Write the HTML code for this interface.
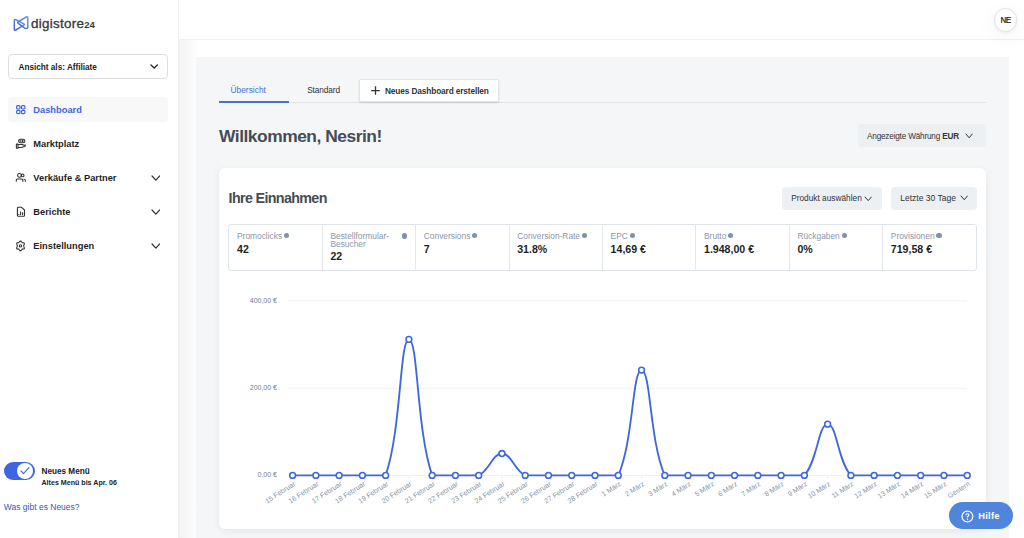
<!DOCTYPE html>
<html><head><meta charset="utf-8">
<style>
*{box-sizing:border-box;margin:0;padding:0}
html,body{width:1024px;height:538px;overflow:hidden;background:#fff;font-family:"Liberation Sans",sans-serif;position:relative}
.a{position:absolute;white-space:nowrap;line-height:1}
.b{position:absolute}
.lbl{color:#8a98aa}
.info{position:absolute;width:5.2px;height:5.2px;border-radius:50%;background:#8191a6}
.ii{display:inline-block;width:5.2px;height:5.2px;border-radius:50%;background:#8191a6;margin-left:1.8px;vertical-align:0.8px}
</style></head><body>
<div class="b" style="left:0;top:0;width:179px;height:538px;background:#fff;border-right:1px solid #eeeeee"></div>
<div class="b" style="left:179px;top:0;width:845px;height:40px;background:#fff;border-bottom:1px solid #f1f1f1"></div>
<div class="b" style="left:179px;top:40px;width:19px;height:498px;background:linear-gradient(90deg,#f2f2f2,#f8f8f8 50%,#fff)"></div>
<div class="b" style="left:196px;top:57px;width:813px;height:490px;background:#f5f6f8"></div>
<svg class="a" style="left:10px;top:12px" width="24" height="24" viewBox="0 0 24 24">
<defs><linearGradient id="lg" x1="0" y1="1" x2="1" y2="0"><stop offset="0" stop-color="#5660cc"/><stop offset="1" stop-color="#55a2e2"/></linearGradient></defs>
<g fill="none" stroke="url(#lg)" stroke-width="1.5" stroke-linejoin="round" stroke-linecap="round">
<path d="M4.3 8.6 Q4.3 7 5.8 7.7 L13.8 11.9 Q14.9 12.5 13.8 13.2 L5.8 18 Q4.3 18.9 4.3 17.2 Z"/>
<path d="M16.3 5 Q17.8 4.3 17.8 6 L17.8 15.1 Q17.8 16.5 16.3 16.4 L15 16.3 L8.3 11.3 Q7.1 10.4 8.4 9.7 Z"/>
</g></svg>
<div class="a" style="left:31px;top:17px;font-size:13.4px;color:#3a3a3a;letter-spacing:0.3px;-webkit-text-stroke:0.35px #3a3a3a">digistore<span style="font-size:9.6px;font-weight:700;letter-spacing:-0.1px;-webkit-text-stroke:0">24</span></div>
<div class="b" style="left:8px;top:54px;width:160px;height:25px;border:1px solid #dedede;border-radius:4px"></div>
<div class="a" style="left:18.5px;top:64px;font-size:8.2px;font-weight:700;color:#222;">Ansicht als: Affiliate</div>
<svg class="a" style="left:150.0px;top:64.2px" width="8.4" height="5.0"><path d="M1 1 L4.20 4.00 L7.40 1" fill="none" stroke="#222" stroke-width="1.3" stroke-linecap="round" stroke-linejoin="round"/></svg>
<div class="b" style="left:8px;top:97px;width:160px;height:25px;background:#f8f8f8;border-radius:4px"></div>
<svg class="a" style="left:15px;top:104px" width="12" height="12" viewBox="0 0 12 12" fill="none" stroke="#3d66de" stroke-width="1.2"><rect x="1.6" y="1.6" width="3.4" height="3.4" rx="1.1"/><rect x="6.5" y="1.6" width="3.4" height="3.4" rx="1.1"/><rect x="1.6" y="6.3" width="3.4" height="3.4" rx="1.1"/><rect x="6.5" y="6.3" width="3.4" height="3.4" rx="1.1"/></svg>
<div class="a" style="left:33.3px;top:106px;font-size:9.3px;font-weight:700;color:#3d66de;">Dashboard</div>
<svg class="a" style="left:12px;top:134px" width="18" height="18" viewBox="0 0 18 18" fill="none" stroke="#333" stroke-width="1.1" stroke-linejoin="round"><rect x="6.6" y="5.2" width="6.2" height="3.5" rx="1.75"/><path d="M8.2 6 L8.2 7.9"/><path d="M10.2 6.2 L11.2 7 L10.2 7.7Z" fill="#333"/><rect x="4.4" y="10.1" width="1.6" height="4.2"/><path d="M6 10.5 L10.5 10.5 Q11.2 10.5 11.2 11.2 L13.3 11 Q13.6 11.6 13 12.2 L9.5 13.5 L6 13.5"/></svg>
<div class="a" style="left:33.3px;top:140px;font-size:9.3px;font-weight:700;color:#1f1f1f;">Marktplatz</div>
<svg class="a" style="left:12px;top:168px" width="18" height="18" viewBox="0 0 18 18" fill="none" stroke="#333" stroke-width="1.1"><circle cx="7.5" cy="7.4" r="1.9"/><circle cx="10.6" cy="7.4" r="1.4"/><path d="M4.3 13.8 L4.3 12 Q4.3 11 5.3 11 L9.8 11 Q10.8 11 10.8 12 L10.8 13.8"/><path d="M11.6 11.3 Q13.5 11.3 13.5 13.2 L13.5 13.8"/></svg>
<div class="a" style="left:33.3px;top:174px;font-size:9.3px;font-weight:700;color:#1f1f1f;">Verkäufe &amp; Partner</div>
<svg class="a" style="left:150.6px;top:174.6px" width="9.7" height="6.2"><path d="M1 1 L4.85 5.20 L8.70 1" fill="none" stroke="#333" stroke-width="1.2" stroke-linecap="round" stroke-linejoin="round"/></svg>
<svg class="a" style="left:12px;top:202px" width="18" height="18" viewBox="0 0 18 18" fill="none" stroke="#333" stroke-width="1.1" stroke-linejoin="round"><path d="M5.4 6.2 Q5.4 5.3 6.3 5.3 L9.6 5.3 L12.5 8 L12.5 13.4 Q12.5 14.2 11.7 14.2 L6.3 14.2 Q5.4 14.2 5.4 13.4 Z"/><path d="M8.6 13 L8.6 9.6 M10.6 13 L10.6 10.2 M6.8 13 L6.8 12"/></svg>
<div class="a" style="left:33.3px;top:208px;font-size:9.3px;font-weight:700;color:#1f1f1f;">Berichte</div>
<svg class="a" style="left:150.6px;top:208.6px" width="9.7" height="6.2"><path d="M1 1 L4.85 5.20 L8.70 1" fill="none" stroke="#333" stroke-width="1.2" stroke-linecap="round" stroke-linejoin="round"/></svg>
<svg class="a" style="left:12px;top:236px" width="18" height="18" viewBox="0 0 18 18" fill="none" stroke="#333" stroke-width="1.1" stroke-linejoin="round"><path d="M8.5 5.2 Q9 5 9.6 5.8 L10.2 6.7 L11.6 6.8 Q12.6 7 12.3 7.9 L11.6 9.9 L12.3 11.9 Q12.6 12.8 11.6 13 L10.2 13.1 L9.6 14 Q9 14.8 8.5 14.6 Q8 14.8 7.4 14 L6.8 13.1 L5.4 13 Q4.4 12.8 4.7 11.9 L5.4 9.9 L4.7 7.9 Q4.4 7 5.4 6.8 L6.8 6.7 L7.4 5.8 Q8 5 8.5 5.2 Z"/><circle cx="8.5" cy="9.9" r="1.15"/></svg>
<div class="a" style="left:33.3px;top:242px;font-size:9.3px;font-weight:700;color:#1f1f1f;">Einstellungen</div>
<svg class="a" style="left:150.6px;top:242.6px" width="9.7" height="6.2"><path d="M1 1 L4.85 5.20 L8.70 1" fill="none" stroke="#333" stroke-width="1.2" stroke-linecap="round" stroke-linejoin="round"/></svg>
<div class="b" style="left:3.5px;top:461.5px;width:31px;height:18.6px;border-radius:10px;background:#3e66e0"></div>
<div class="b" style="left:17px;top:463px;width:15.8px;height:15.8px;border-radius:50%;background:#fff"></div>
<svg class="a" style="left:17px;top:463px" width="16" height="16" viewBox="0 0 16 16"><path d="M3.9 7.8 L6.4 10.6 L12 4.7" fill="none" stroke="#3e66e0" stroke-width="1.1" stroke-linecap="round" stroke-linejoin="round"/></svg>
<div class="a" style="left:41.5px;top:468px;font-size:8.2px;font-weight:700;color:#222;">Neues Menü</div>
<div class="a" style="left:41.5px;top:480px;font-size:7.1px;font-weight:700;color:#222;">Altes Menü bis Apr. 06</div>
<div class="a" style="left:3.8px;top:503px;font-size:8.5px;font-weight:400;color:#3a5bb6;">Was gibt es Neues?</div>
<div class="b" style="left:993.6px;top:8.2px;width:23.4px;height:23.4px;border-radius:50%;background:#fff;border:1px solid #e2e2e2;box-shadow:0 1px 3px rgba(0,0,0,0.06),0 6px 22px rgba(0,0,0,0.05)"></div>
<div class="a" style="left:1000.5px;top:17px;font-size:8.2px;font-weight:700;color:#3a3a3a;letter-spacing:-0.6px">NE</div>
<div class="b" style="left:219px;top:102px;width:767px;height:1px;background:#e1e3e7"></div>
<div class="b" style="left:219px;top:101px;width:70px;height:2px;background:#3e74d8"></div>
<div class="a" style="left:230.5px;top:86px;font-size:8.4px;font-weight:400;color:#3e74d8;">Übersicht</div>
<div class="a" style="left:307.2px;top:86px;font-size:8.3px;font-weight:400;color:#333;letter-spacing:-0.12px">Standard</div>
<div class="b" style="left:359px;top:79px;width:139.5px;height:22.6px;background:#fff;border:1px solid #e4e4e4;border-radius:2px;box-shadow:0 1px 2px rgba(0,0,0,0.12)"></div>
<svg class="a" style="left:371px;top:86.3px" width="9" height="9" viewBox="0 0 9 9"><path d="M4.5 0.2 V8.8 M0.2 4.5 H8.8" stroke="#333" stroke-width="1.25"/></svg>
<div class="a" style="left:385px;top:87px;font-size:8.3px;font-weight:700;color:#333;letter-spacing:-0.13px">Neues Dashboard erstellen</div>
<div class="a" style="left:219px;top:128px;font-size:17.4px;font-weight:700;color:#444c55;letter-spacing:-0.48px">Willkommen, Nesrin!</div>
<div class="b" style="left:858px;top:124px;width:127.5px;height:23px;background:#edf0f3;border-radius:3px"></div>
<div class="a" style="left:867px;top:133px;font-size:8.2px;font-weight:400;color:#333;letter-spacing:-0.19px">Angezeigte Währung <b>EUR</b></div>
<svg class="a" style="left:964.5px;top:133.3px" width="8.3" height="5.8"><path d="M1 1 L4.15 4.80 L7.30 1" fill="none" stroke="#333" stroke-width="1.0" stroke-linecap="round" stroke-linejoin="round"/></svg>
<div class="b" style="left:219px;top:168px;width:767px;height:361px;background:#fff;border-radius:6px;box-shadow:0 2px 8px rgba(0,0,0,0.07)"></div>
<div class="a" style="left:228.6px;top:191px;font-size:14.3px;font-weight:700;color:#444c55;letter-spacing:-0.65px">Ihre Einnahmen</div>
<div class="b" style="left:782px;top:186.5px;width:99.7px;height:23.2px;background:#edf0f3;border-radius:4px"></div>
<div class="a" style="left:791.2px;top:194px;font-size:8.3px;font-weight:400;color:#333;">Produkt auswählen</div>
<svg class="a" style="left:864.0px;top:195.8px" width="8.4" height="5.6"><path d="M1 1 L4.20 4.60 L7.40 1" fill="none" stroke="#333" stroke-width="1.0" stroke-linecap="round" stroke-linejoin="round"/></svg>
<div class="b" style="left:891px;top:186.5px;width:85.6px;height:23.2px;background:#edf0f3;border-radius:4px"></div>
<div class="a" style="left:900.3px;top:194px;font-size:8.5px;font-weight:400;color:#333;">Letzte 30 Tage</div>
<svg class="a" style="left:959.5px;top:195.2px" width="8.5" height="5.7"><path d="M1 1 L4.25 4.70 L7.50 1" fill="none" stroke="#333" stroke-width="1.0" stroke-linecap="round" stroke-linejoin="round"/></svg>
<div class="b" style="left:228.4px;top:223.9px;width:748.2px;height:47.4px;border:1px solid #dfe4e9;border-radius:3px"></div>
<div class="a lbl" style="left:237.0px;top:233px;font-size:8.4px;line-height:7.6px">Promoclicks<span class="ii"></span></div>
<div class="a" style="left:237.0px;top:244px;font-size:10.6px;font-weight:700;color:#1e1f22;">42</div>
<div class="b" style="left:321.8px;top:224px;width:1px;height:47px;background:#e3e6ea"></div>
<div class="a lbl" style="left:330.4px;top:233px;font-size:8.4px;line-height:7.6px">Bestellformular-<br>Besucher</div>
<div class="info" style="left:401.8px;top:233.4px"></div>
<div class="a" style="left:330.4px;top:251px;font-size:10.6px;font-weight:700;color:#1e1f22;">22</div>
<div class="b" style="left:415.2px;top:224px;width:1px;height:47px;background:#e3e6ea"></div>
<div class="a lbl" style="left:423.8px;top:233px;font-size:8.4px;line-height:7.6px">Conversions<span class="ii"></span></div>
<div class="a" style="left:423.8px;top:244px;font-size:10.6px;font-weight:700;color:#1e1f22;">7</div>
<div class="b" style="left:508.6px;top:224px;width:1px;height:47px;background:#e3e6ea"></div>
<div class="a lbl" style="left:517.2px;top:233px;font-size:8.4px;line-height:7.6px">Conversion-Rate<span class="ii"></span></div>
<div class="a" style="left:517.2px;top:244px;font-size:10.6px;font-weight:700;color:#1e1f22;">31.8%</div>
<div class="b" style="left:602.0px;top:224px;width:1px;height:47px;background:#e3e6ea"></div>
<div class="a lbl" style="left:610.6px;top:233px;font-size:8.4px;line-height:7.6px">EPC<span class="ii"></span></div>
<div class="a" style="left:610.6px;top:244px;font-size:10.6px;font-weight:700;color:#1e1f22;">14,69 €</div>
<div class="b" style="left:695.4px;top:224px;width:1px;height:47px;background:#e3e6ea"></div>
<div class="a lbl" style="left:704.0px;top:233px;font-size:8.4px;line-height:7.6px">Brutto<span class="ii"></span></div>
<div class="a" style="left:704.0px;top:244px;font-size:10.6px;font-weight:700;color:#1e1f22;">1.948,00 €</div>
<div class="b" style="left:788.8px;top:224px;width:1px;height:47px;background:#e3e6ea"></div>
<div class="a lbl" style="left:797.4px;top:233px;font-size:8.4px;line-height:7.6px">Rückgaben<span class="ii"></span></div>
<div class="a" style="left:797.4px;top:244px;font-size:10.6px;font-weight:700;color:#1e1f22;">0%</div>
<div class="b" style="left:882.2px;top:224px;width:1px;height:47px;background:#e3e6ea"></div>
<div class="a lbl" style="left:890.8px;top:233px;font-size:8.4px;line-height:7.6px">Provisionen<span class="ii"></span></div>
<div class="a" style="left:890.8px;top:244px;font-size:10.6px;font-weight:700;color:#1e1f22;">719,58 €</div>
<!--INFO--><svg class="a" style="left:0;top:0" width="1024" height="538">
<g stroke="#f0f1f3" stroke-width="1"><line x1="288" y1="300.9" x2="967.2" y2="300.9"/><line x1="288" y1="388.2" x2="967.2" y2="388.2"/><line x1="288" y1="475.4" x2="967.2" y2="475.4"/><line x1="292.60" y1="475.4" x2="292.60" y2="479"/><line x1="315.86" y1="475.4" x2="315.86" y2="479"/><line x1="339.12" y1="475.4" x2="339.12" y2="479"/><line x1="362.39" y1="475.4" x2="362.39" y2="479"/><line x1="385.65" y1="475.4" x2="385.65" y2="479"/><line x1="408.91" y1="475.4" x2="408.91" y2="479"/><line x1="432.17" y1="475.4" x2="432.17" y2="479"/><line x1="455.43" y1="475.4" x2="455.43" y2="479"/><line x1="478.70" y1="475.4" x2="478.70" y2="479"/><line x1="501.96" y1="475.4" x2="501.96" y2="479"/><line x1="525.22" y1="475.4" x2="525.22" y2="479"/><line x1="548.48" y1="475.4" x2="548.48" y2="479"/><line x1="571.74" y1="475.4" x2="571.74" y2="479"/><line x1="595.01" y1="475.4" x2="595.01" y2="479"/><line x1="618.27" y1="475.4" x2="618.27" y2="479"/><line x1="641.53" y1="475.4" x2="641.53" y2="479"/><line x1="664.79" y1="475.4" x2="664.79" y2="479"/><line x1="688.06" y1="475.4" x2="688.06" y2="479"/><line x1="711.32" y1="475.4" x2="711.32" y2="479"/><line x1="734.58" y1="475.4" x2="734.58" y2="479"/><line x1="757.84" y1="475.4" x2="757.84" y2="479"/><line x1="781.10" y1="475.4" x2="781.10" y2="479"/><line x1="804.37" y1="475.4" x2="804.37" y2="479"/><line x1="827.63" y1="475.4" x2="827.63" y2="479"/><line x1="850.89" y1="475.4" x2="850.89" y2="479"/><line x1="874.15" y1="475.4" x2="874.15" y2="479"/><line x1="897.41" y1="475.4" x2="897.41" y2="479"/><line x1="920.68" y1="475.4" x2="920.68" y2="479"/><line x1="943.94" y1="475.4" x2="943.94" y2="479"/><line x1="967.20" y1="475.4" x2="967.20" y2="479"/></g>
<g font-family="Liberation Sans" font-size="7px" fill="#6f7d90" text-anchor="end"><text x="277" y="303">400,00 €</text><text x="277" y="390.2">200,00 €</text><text x="277" y="477.4">0,00 €</text></g>
<path d="M292.60 475.40 C301.90 475.40 306.56 475.40 315.86 475.40 C325.17 475.40 329.82 475.40 339.12 475.40 C348.43 475.40 353.08 475.40 362.39 475.40 C371.69 475.40 382.96 475.40 385.65 475.40 C401.57 428.86 399.61 339.42 408.91 339.42 C418.22 339.42 416.25 428.86 432.17 475.40 C434.86 475.40 446.13 475.40 455.43 475.40 C464.74 475.40 470.86 475.40 478.70 475.40 C489.47 470.33 492.65 453.50 501.96 453.50 C511.26 453.50 514.45 470.33 525.22 475.40 C533.06 475.40 539.18 475.40 548.48 475.40 C557.79 475.40 562.44 475.40 571.74 475.40 C581.05 475.40 585.70 475.40 595.01 475.40 C604.31 475.40 614.97 475.40 618.27 475.40 C633.58 440.75 632.23 370.09 641.53 370.09 C650.84 370.09 649.49 440.75 664.79 475.40 C668.09 475.40 678.75 475.40 688.06 475.40 C697.36 475.40 702.01 475.40 711.32 475.40 C720.62 475.40 725.27 475.40 734.58 475.40 C743.88 475.40 748.54 475.40 757.84 475.40 C767.15 475.40 771.80 475.40 781.10 475.40 C790.41 475.40 798.92 475.40 804.37 475.40 C817.53 460.91 818.32 424.18 827.63 424.18 C836.93 424.18 837.72 460.91 850.89 475.40 C856.33 475.40 864.85 475.40 874.15 475.40 C883.46 475.40 888.11 475.40 897.41 475.40 C906.72 475.40 911.37 475.40 920.68 475.40 C929.98 475.40 934.63 475.40 943.94 475.40 C953.24 475.40 957.90 475.40 967.20 475.40" fill="none" stroke="#3e67e0" stroke-width="1.85"/>
<g fill="#fff" stroke="#3e67e0" stroke-width="1.55"><circle cx="292.60" cy="475.40" r="2.9"/><circle cx="315.86" cy="475.40" r="2.9"/><circle cx="339.12" cy="475.40" r="2.9"/><circle cx="362.39" cy="475.40" r="2.9"/><circle cx="385.65" cy="475.40" r="2.9"/><circle cx="408.91" cy="339.42" r="2.9"/><circle cx="432.17" cy="475.40" r="2.9"/><circle cx="455.43" cy="475.40" r="2.9"/><circle cx="478.70" cy="475.40" r="2.9"/><circle cx="501.96" cy="453.50" r="2.9"/><circle cx="525.22" cy="475.40" r="2.9"/><circle cx="548.48" cy="475.40" r="2.9"/><circle cx="571.74" cy="475.40" r="2.9"/><circle cx="595.01" cy="475.40" r="2.9"/><circle cx="618.27" cy="475.40" r="2.9"/><circle cx="641.53" cy="370.09" r="2.9"/><circle cx="664.79" cy="475.40" r="2.9"/><circle cx="688.06" cy="475.40" r="2.9"/><circle cx="711.32" cy="475.40" r="2.9"/><circle cx="734.58" cy="475.40" r="2.9"/><circle cx="757.84" cy="475.40" r="2.9"/><circle cx="781.10" cy="475.40" r="2.9"/><circle cx="804.37" cy="475.40" r="2.9"/><circle cx="827.63" cy="424.18" r="2.9"/><circle cx="850.89" cy="475.40" r="2.9"/><circle cx="874.15" cy="475.40" r="2.9"/><circle cx="897.41" cy="475.40" r="2.9"/><circle cx="920.68" cy="475.40" r="2.9"/><circle cx="943.94" cy="475.40" r="2.9"/><circle cx="967.20" cy="475.40" r="2.9"/></g>
<g font-family="Liberation Sans" font-size="7px" fill="#8593a5"><text transform="translate(295.90 485) rotate(-33)" text-anchor="end">15 Februar</text><text transform="translate(319.16 485) rotate(-33)" text-anchor="end">16 Februar</text><text transform="translate(342.42 485) rotate(-33)" text-anchor="end">17 Februar</text><text transform="translate(365.69 485) rotate(-33)" text-anchor="end">18 Februar</text><text transform="translate(388.95 485) rotate(-33)" text-anchor="end">19 Februar</text><text transform="translate(412.21 485) rotate(-33)" text-anchor="end">20 Februar</text><text transform="translate(435.47 485) rotate(-33)" text-anchor="end">21 Februar</text><text transform="translate(458.73 485) rotate(-33)" text-anchor="end">22 Februar</text><text transform="translate(482.00 485) rotate(-33)" text-anchor="end">23 Februar</text><text transform="translate(505.26 485) rotate(-33)" text-anchor="end">24 Februar</text><text transform="translate(528.52 485) rotate(-33)" text-anchor="end">25 Februar</text><text transform="translate(551.78 485) rotate(-33)" text-anchor="end">26 Februar</text><text transform="translate(575.04 485) rotate(-33)" text-anchor="end">27 Februar</text><text transform="translate(598.31 485) rotate(-33)" text-anchor="end">28 Februar</text><text transform="translate(621.57 485) rotate(-33)" text-anchor="end">1 März</text><text transform="translate(644.83 485) rotate(-33)" text-anchor="end">2 März</text><text transform="translate(668.09 485) rotate(-33)" text-anchor="end">3 März</text><text transform="translate(691.36 485) rotate(-33)" text-anchor="end">4 März</text><text transform="translate(714.62 485) rotate(-33)" text-anchor="end">5 März</text><text transform="translate(737.88 485) rotate(-33)" text-anchor="end">6 März</text><text transform="translate(761.14 485) rotate(-33)" text-anchor="end">7 März</text><text transform="translate(784.40 485) rotate(-33)" text-anchor="end">8 März</text><text transform="translate(807.67 485) rotate(-33)" text-anchor="end">9 März</text><text transform="translate(830.93 485) rotate(-33)" text-anchor="end">10 März</text><text transform="translate(854.19 485) rotate(-33)" text-anchor="end">11 März</text><text transform="translate(877.45 485) rotate(-33)" text-anchor="end">12 März</text><text transform="translate(900.71 485) rotate(-33)" text-anchor="end">13 März</text><text transform="translate(923.98 485) rotate(-33)" text-anchor="end">14 März</text><text transform="translate(947.24 485) rotate(-33)" text-anchor="end">15 März</text><text transform="translate(970.50 485) rotate(-33)" text-anchor="end">Gestern</text></g>
</svg>
<div class="b" style="left:948.6px;top:502px;width:64.4px;height:27px;border-radius:14px;background:#4f86dc"></div>
<svg class="a" style="left:961px;top:509.5px" width="13" height="13" viewBox="0 0 13 13"><circle cx="6.4" cy="6.5" r="5.4" fill="none" stroke="#fff" stroke-width="1.2"/><path d="M4.9 5.2 Q4.9 3.7 6.4 3.7 Q7.9 3.7 7.9 5 Q7.9 5.9 6.4 6.5 L6.4 7.5" fill="none" stroke="#fff" stroke-width="1.1"/><circle cx="6.4" cy="9.2" r="0.7" fill="#fff"/></svg>
<div class="a" style="left:978.3px;top:512px;font-size:9.3px;font-weight:700;color:#fff;letter-spacing:0.25px">Hilfe</div>
</body></html>
